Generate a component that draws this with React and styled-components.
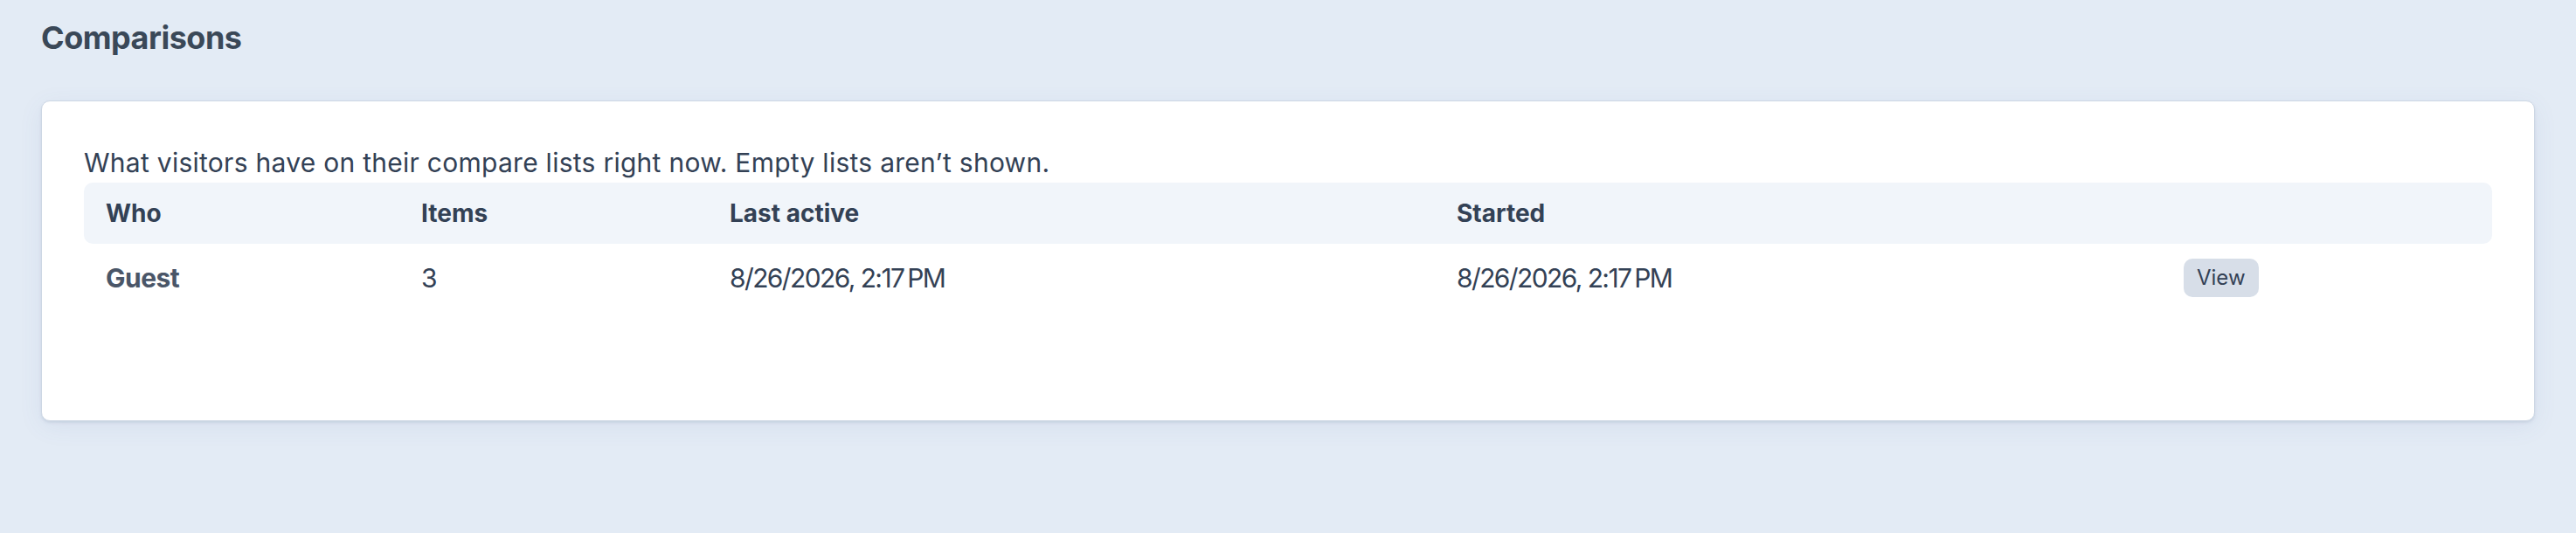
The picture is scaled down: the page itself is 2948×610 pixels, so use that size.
import React from "react";
import styled, { createGlobalStyle } from "styled-components";

const GlobalStyle = createGlobalStyle`
  html, body {
    margin: 0;
    padding: 0;
    background: #e3ebf5;
  }
  body {
    font-family: Inter, "Noto Sans", "Liberation Sans", sans-serif;
    color: #334155;
    -webkit-font-smoothing: antialiased;
  }
`;

const Page = styled.main`
  padding: 21px 47px 40px;
`;

const Title = styled.h1`
  margin: 0;
  font-size: 36px;
  line-height: 44px;
  font-weight: 700;
  letter-spacing: -0.5px;
  color: #3a4858;
`;

const Card = styled.section`
  margin-top: 50px;
  background: #ffffff;
  border: 1px solid #cdd7e4;
  border-radius: 10px;
  box-shadow: 0 2px 3px rgba(148, 163, 184, 0.25), 0 6px 28px rgba(71, 105, 160, 0.08);
  padding: 48px 48px 124px;
`;

const Lead = styled.p`
  margin: 0;
  font-size: 30px;
  line-height: 45px;
  letter-spacing: 0.27px;
  color: #334155;
`;

const COLUMNS = "361px 353px 832px 832px 1fr";

const HeadRow = styled.div`
  display: grid;
  grid-template-columns: ${COLUMNS};
  align-items: center;
  height: 70px;
  background: #f1f5fa;
  border-radius: 10px;
`;

const HeadCell = styled.div`
  padding: 0 25px;
  font-size: 28px;
  font-weight: 700;
  color: #334155;
`;

const Row = styled.div`
  display: grid;
  grid-template-columns: ${COLUMNS};
  align-items: center;
  height: 78px;
`;

const Cell = styled.div`
  padding: 0 25px;
  font-size: 30px;
  font-weight: ${(p) => (p.$strong ? 700 : 400)};
  letter-spacing: ${(p) => (p.$strong ? "-0.5px" : "0")};
  color: ${(p) => (p.$strong ? "#4a5668" : "#334155")};
`;

/* timestamps are set a little tighter than the rest of the row */
const Stamp = styled(Cell)`
  letter-spacing: -1.6px;
`;

const ViewButton = styled.button`
  font-family: inherit;
  font-size: 24px;
  line-height: 44px;
  height: 44px;
  padding: 0 15px;
  border: none;
  border-radius: 10px;
  background: #d7dee8;
  color: #334155;
  cursor: pointer;
`;

const rows = [
  {
    who: "Guest",
    items: 3,
    lastActive: "8/26/2026, 2:17\u202FPM",
    started: "8/26/2026, 2:17\u202FPM",
  },
];

export default function App() {
  return (
    <>
      <GlobalStyle />
      <Page>
        <Title>Comparisons</Title>
        <Card>
          <Lead>
            What visitors have on their compare lists right now. Empty lists aren’t shown.
          </Lead>
          <HeadRow>
            <HeadCell>Who</HeadCell>
            <HeadCell>Items</HeadCell>
            <HeadCell>Last active</HeadCell>
            <HeadCell>Started</HeadCell>
            <HeadCell />
          </HeadRow>
          {rows.map((r, i) => (
            <Row key={i}>
              <Cell $strong>{r.who}</Cell>
              <Cell>{r.items}</Cell>
              <Stamp>{r.lastActive}</Stamp>
              <Stamp>{r.started}</Stamp>
              <Cell>
                <ViewButton type="button">View</ViewButton>
              </Cell>
            </Row>
          ))}
        </Card>
      </Page>
    </>
  );
}
